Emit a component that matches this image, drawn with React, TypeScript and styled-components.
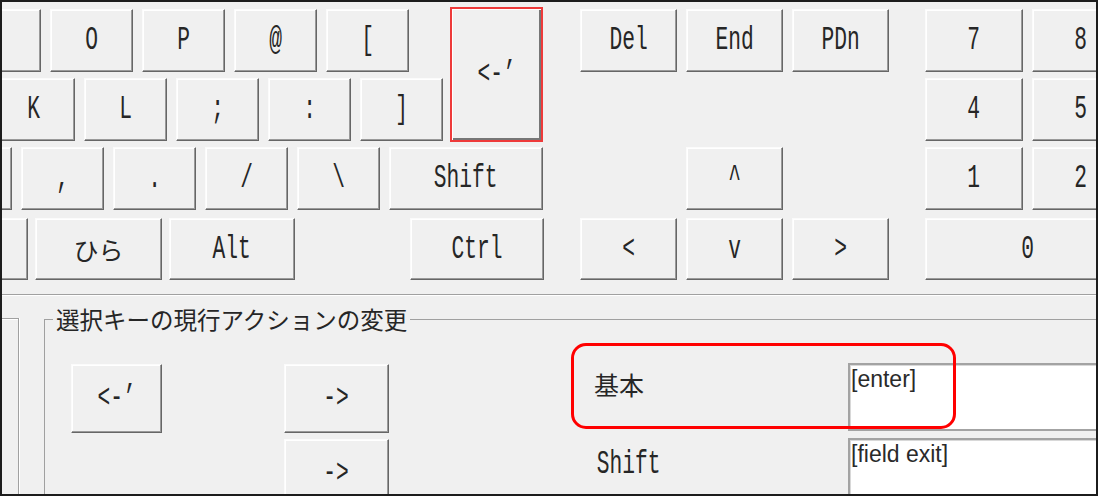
import React from 'react';
import styled, { createGlobalStyle } from 'styled-components';

const GlobalStyle = createGlobalStyle`
  html, body {
    margin: 0;
    padding: 0;
    background: #f0f0f0;
  }
  body {
    width: 1098px;
    height: 496px;
    overflow: hidden;
  }
`;

const Frame = styled.div`
  position: relative;
  box-sizing: border-box;
  width: 1098px;
  height: 496px;
  border: 2px solid #1c1c1c;
  background: #f0f0f0;
  overflow: hidden;
  display: flex;
  flex-direction: column;
`;

const Keyboard = styled.section`
  display: flex;
  align-items: flex-start;
  padding-top: 7px;
  flex-shrink: 0;
`;

const MainCluster = styled.div`
  width: 542px;
  flex-shrink: 0;
  display: flex;
  flex-direction: column;
  gap: 6px;
`;

const TopBlock = styled.div`
  display: flex;
  align-items: flex-start;
`;

const RowStack = styled.div`
  width: 446px;
  flex-shrink: 0;
  display: flex;
  flex-direction: column;
  gap: 6px;
`;

const KeyRow = styled.div<{ $offset: number; $gap?: number; $h?: number; $top?: number; $fill?: boolean }>`
  display: flex;
  gap: ${p => p.$gap ?? 9}px;
  height: ${p => p.$h ?? 63}px;
  margin-left: ${p => p.$offset}px;
  margin-top: ${p => p.$top ?? 0}px;
  width: ${p => (p.$fill ? `calc(100% + ${-p.$offset}px)` : 'auto')};
`;

const KeyGrid = styled.div<{ $cols: string; $ml: number }>`
  flex-shrink: 0;
  margin-left: ${p => p.$ml}px;
  display: grid;
  grid-template-columns: ${p => p.$cols};
  grid-template-rows: 63px 6px 63px 6px 63px 8px 62px;
  column-gap: 9px;
`;

const Key = styled.div<{
  $w?: number;
  $h?: number;
  $row?: number;
  $col?: string;
  $push?: boolean;
  $highlight?: boolean;
}>`
  box-sizing: border-box;
  flex: 0 0 auto;
  width: ${p => (p.$w ? `${p.$w}px` : 'auto')};
  height: ${p => (p.$h ? `${p.$h}px` : 'auto')};
  grid-row: ${p => (p.$row ? p.$row * 2 - 1 : 'auto')};
  grid-column: ${p => p.$col ?? 'auto'};
  margin-left: ${p => (p.$push ? 'auto' : '0')};
  display: flex;
  align-items: center;
  justify-content: center;
  overflow: hidden;
  background: #f0f0f0;
  border-style: solid;
  ${p =>
    p.$highlight
      ? `
    border-width: 2px;
    border-color: #ee3a3a;
    box-shadow: inset 1px 1px 0 #ffffff, inset -2px -2px 0 #767676;
  `
      : `
    border-width: 1px 1px 1px 1px;
    border-color: #fbfbfb #666666 #666666 #fbfbfb;
    box-shadow: inset -1px -1px 0 #9a9a9a, inset 1px 1px 0 #ffffff;
  `}
`;

const EnterKey = styled(Key)`
  margin-left: 2px;
  margin-top: -2px;
  margin-bottom: -1px;
`;

const Cap = styled.span<{ $cjk?: boolean }>`
  display: inline-block;
  font-family: ${p =>
    p.$cjk ? '"Noto Sans CJK JP", sans-serif' : '"Liberation Mono", "Noto Sans CJK JP", monospace'};
  font-size: ${p => (p.$cjk ? '25px' : '25px')};
  line-height: 1;
  color: #262626;
  white-space: pre;
  transform: ${p => (p.$cjk ? 'none' : 'scale(0.85, 1.35)')};
`;

const Separator = styled.div`
  flex-shrink: 0;
  margin-top: 14px;
  border-top: 1px solid #a0a0a0;
  border-bottom: 1px solid #ffffff;
`;

const Bottom = styled.section`
  flex: 1;
  min-height: 0;
  display: flex;
  align-items: flex-start;
`;

const SideStub = styled.div`
  flex-shrink: 0;
  width: 16px;
  height: 220px;
  margin-top: 22px;
  border-top: 1px solid #a0a0a0;
  border-right: 1px solid #a0a0a0;
  box-shadow: inset 0 1px 0 #ffffff, 1px 0 0 #ffffff;
`;

const GroupBox = styled.fieldset`
  flex: 1;
  min-width: 0;
  margin: 8px -80px 0 25px;
  padding: 0;
  height: 300px;
  border: 1px solid #a0a0a0;
`;

const GroupTitle = styled.legend`
  margin-left: 8px;
  padding: 0 3px;
  font-family: "Noto Sans CJK JP", sans-serif;
  font-size: 23.5px;
  line-height: 30px;
  color: #262626;
`;

const ActionGrid = styled.div`
  margin-top: 30px;
  padding-left: 26px;
  display: grid;
  grid-template-columns: 213px 305px 259px 1fr;
  grid-template-rows: 69px 69px;
  row-gap: 6px;
`;

const FieldLabel = styled.div<{ $cjk?: boolean }>`
  padding-top: ${p => (p.$cjk ? '8px' : '13px')};
  padding-left: ${p => (p.$cjk ? '5px' : '2px')};
`;

const TextBox = styled.div`
  box-sizing: border-box;
  height: 68px;
  margin-top: -1px;
  background: #ffffff;
  border: 2px solid #a3a3a3;
  box-shadow: inset 1px 1px 0 #d8d8d8;
  padding: 1px 1px;
  font-family: "Liberation Sans", Arial, sans-serif;
  font-size: 23px;
  line-height: 26px;
  color: #2a2a2a;
  white-space: pre;
`;

const Annotation = styled.div`
  position: absolute;
  left: 569px;
  top: 341px;
  width: 385px;
  height: 86px;
  box-sizing: border-box;
  border: 3.5px solid #ff0000;
  border-radius: 15px;
  pointer-events: none;
`;

type K = { l: string; w?: number; cjk?: boolean; push?: boolean };

const row1: K[] = [{ l: '', w: 83 }, ...['O', 'P', '@', '['].map(l => ({ l, w: 83 }))];
const row2: K[] = ['K', 'L', ';', ':', ']'].map(l => ({ l, w: 83 }));
const row3: K[] = [
  { l: '', w: 83 },
  ...[',', '.', '/', '\\'].map(l => ({ l, w: 83 })),
  { l: 'Shift', w: 154 },
];
const row4: K[] = [
  { l: '', w: 128 },
  { l: 'ひら', w: 127, cjk: true },
  { l: 'Alt', w: 126 },
  { l: 'Ctrl', w: 134, push: true },
];

type G = { l: string; r: number; c: string };

const navKeys: G[] = [
  { l: 'Del', r: 1, c: '1' },
  { l: 'End', r: 1, c: '2' },
  { l: 'PDn', r: 1, c: '3' },
  { l: '^', r: 3, c: '2' },
  { l: '<', r: 4, c: '1' },
  { l: 'v', r: 4, c: '2' },
  { l: '>', r: 4, c: '3' },
];

const numKeys: G[] = [
  { l: '7', r: 1, c: '1' },
  { l: '8', r: 1, c: '2' },
  { l: '4', r: 2, c: '1' },
  { l: '5', r: 2, c: '2' },
  { l: '1', r: 3, c: '1' },
  { l: '2', r: 3, c: '2' },
  { l: '0', r: 4, c: '1 / 3' },
];

const renderRow = (keys: K[]) =>
  keys.map((k, i) => (
    <Key key={`${k.l}-${i}`} $w={k.w} $push={k.push}>
      {k.l && <Cap $cjk={k.cjk}>{k.l}</Cap>}
    </Key>
  ));

const renderGrid = (keys: G[]) =>
  keys.map(k => (
    <Key key={k.l} $row={k.r} $col={k.c}>
      <Cap>{k.l}</Cap>
    </Key>
  ));

export default function App() {
  return (
    <>
      <GlobalStyle />
      <Frame>
        <Keyboard>
          <MainCluster>
            <TopBlock>
              <RowStack>
                <KeyRow $offset={-44}>{renderRow(row1)}</KeyRow>
                <KeyRow $offset={-10}>{renderRow(row2)}</KeyRow>
              </RowStack>
              <EnterKey $w={93} $h={135} $highlight>
                <Cap>{'<-’'}</Cap>
              </EnterKey>
            </TopBlock>
            <KeyRow $offset={-73}>{renderRow(row3)}</KeyRow>
            <KeyRow $offset={-102} $gap={7} $h={62} $top={2} $fill>
              {renderRow(row4)}
            </KeyRow>
          </MainCluster>
          <KeyGrid $cols="97px 97px 97px" $ml={36}>
            {renderGrid(navKeys)}
          </KeyGrid>
          <KeyGrid $cols="98px 98px" $ml={36}>
            {renderGrid(numKeys)}
          </KeyGrid>
        </Keyboard>
        <Separator />
        <Bottom>
          <SideStub />
          <GroupBox>
            <GroupTitle>選択キーの現行アクションの変更</GroupTitle>
            <ActionGrid>
              <Key $w={91}>
                <Cap>{'<-’'}</Cap>
              </Key>
              <Key $w={105}>
                <Cap>{'->'}</Cap>
              </Key>
              <FieldLabel $cjk>
                <Cap $cjk>基本</Cap>
              </FieldLabel>
              <TextBox>[enter]</TextBox>
              <div />
              <Key $w={105}>
                <Cap>{'->'}</Cap>
              </Key>
              <FieldLabel>
                <Cap>Shift</Cap>
              </FieldLabel>
              <TextBox>[field exit]</TextBox>
            </ActionGrid>
          </GroupBox>
        </Bottom>
        <Annotation />
      </Frame>
    </>
  );
}
